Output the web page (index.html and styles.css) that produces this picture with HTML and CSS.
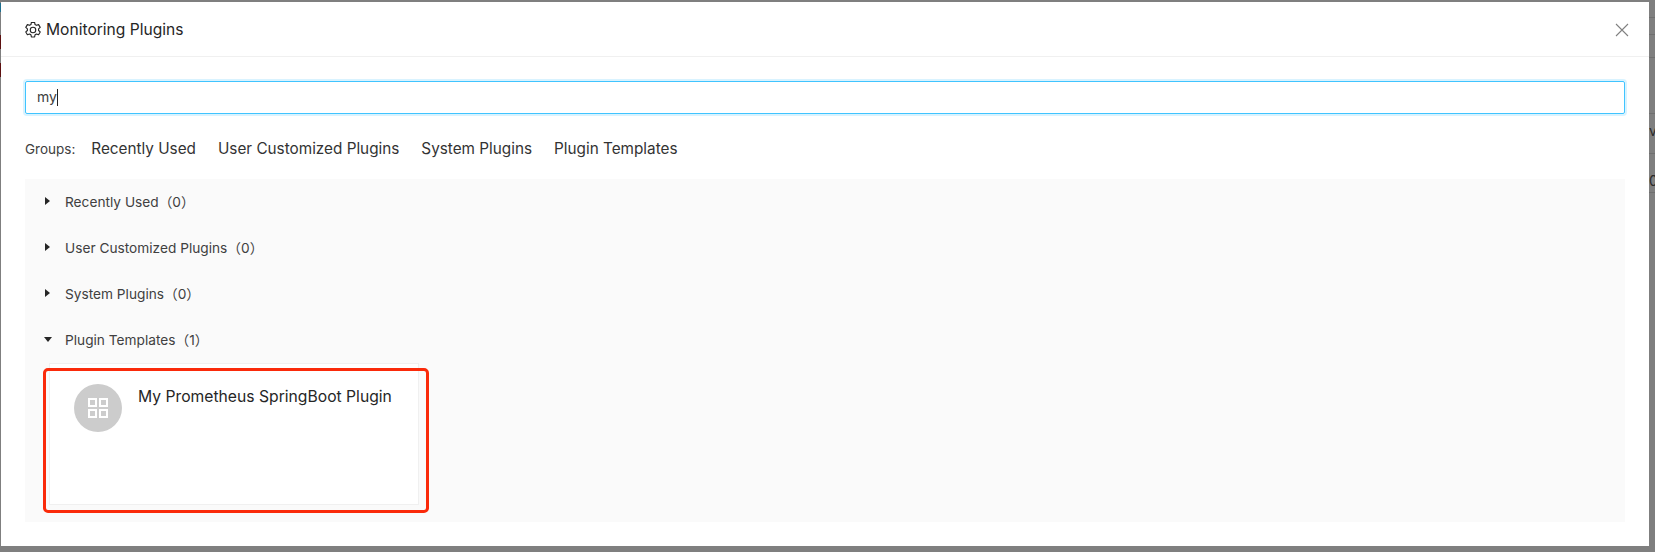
FILE: index.html
```html
<!DOCTYPE html>
<html lang="en">
<head>
<meta charset="utf-8">
<title>Monitoring Plugins</title>
<link rel="stylesheet" href="styles.css">
</head>
<body>
<div class="backdrop">
  <span class="bg-mark bg-mark-blue"></span>
  <span class="bg-mark bg-mark-a"></span>
  <span class="bg-mark bg-mark-b"></span>
  <span class="bg-line bg-line-a"></span>
  <span class="bg-line bg-line-b"></span>
  <span class="bg-line bg-line-c"></span>
  <span class="bg-line bg-line-d"></span>
  <span class="bg-line bg-line-e"></span>
  <span class="bg-line bg-line-f"></span>
  <span class="bg-text bg-text-a">v</span>
  <span class="bg-text bg-text-b">0</span>
  <div class="modal">
    <header class="modal-header">
      <h1 class="modal-title">
        <svg class="gear" viewBox="1.2 1 13.6 14" width="16" height="16" fill="none" stroke="#262626" stroke-width="1" stroke-linejoin="round">
          <path d="M6.6 1.3h2.8l.4 1.9 1.2.7 1.9-.6 1.4 2.4-1.4 1.3v1.4l1.4 1.3-1.4 2.4-1.9-.6-1.2.7-.4 1.9H6.6l-.4-1.9-1.2-.7-1.9.6-1.4-2.4 1.4-1.3V7L1.7 5.7l1.4-2.4 1.9.6 1.2-.7z"/>
          <circle cx="8" cy="8" r="2.4"/>
        </svg>
        <span>Monitoring Plugins</span>
      </h1>
      <svg class="close" viewBox="0 0 14 14" width="14" height="14" stroke="#808080" stroke-width="1.1" fill="none">
        <path d="M1 1l12 12M13 1L1 13"/>
      </svg>
    </header>
    <div class="modal-body">
      <div class="search"><span class="search-value">my</span><span class="caret"></span></div>
      <nav class="groups">
        <span class="groups-label">Groups:</span>
        <a class="group-link">Recently Used</a>
        <a class="group-link">User Customized Plugins</a>
        <a class="group-link">System Plugins</a>
        <a class="group-link">Plugin Templates</a>
      </nav>
      <section class="panel">
        <div class="row"><span class="tri tri-right"></span><span class="row-label">Recently Used（0）</span></div>
        <div class="row"><span class="tri tri-right"></span><span class="row-label">User Customized Plugins（0）</span></div>
        <div class="row"><span class="tri tri-right"></span><span class="row-label">System Plugins（0）</span></div>
        <div class="row"><span class="tri tri-down"></span><span class="row-label">Plugin Templates（1）</span></div>
        <div class="card-wrap">
          <article class="card">
            <div class="avatar">
              <svg viewBox="0 0 20 20" width="20" height="20" fill="none" stroke="#fff" stroke-width="2">
                <rect x="1" y="1" width="7" height="7"/>
                <rect x="12" y="1" width="7" height="7"/>
                <rect x="1" y="12" width="7" height="7"/>
                <rect x="12" y="12" width="7" height="7"/>
              </svg>
            </div>
            <div class="card-title">My Prometheus SpringBoot Plugin</div>
          </article>
          <div class="highlight"></div>
        </div>
      </section>
    </div>
  </div>
</div>
</body>
</html>
```

FILE: styles.css
```css
* { box-sizing: border-box; }
html, body { margin: 0; padding: 0; }
body {
  width: 1655px;
  height: 552px;
  overflow: hidden;
  font-family: Inter, "Noto Sans CJK SC", sans-serif;
  color: #262626;
}
.backdrop {
  position: relative;
  width: 1655px;
  height: 552px;
  background: #7f7f7f;
  padding: 2px 6px 6px 1px;
}
.bg-mark { position: absolute; left: 0; width: 1px; height: 14px; background: #5c1010; }
.bg-mark-blue { top: 3px; height: 9px; background: #1f6f8f; }
.bg-mark-a { top: 35px; }
.bg-mark-b { top: 63px; }
.bg-line { position: absolute; left: 1649px; width: 6px; height: 1px; background: #6f6f6f; }
.bg-line-a { top: 17px; }
.bg-line-b { top: 34px; }
.bg-line-c { top: 57px; }
.bg-line-d { top: 113px; }
.bg-line-e { top: 153px; }
.bg-line-f { top: 192px; }
.bg-text { position: absolute; left: 1649px; font-size: 14px; line-height: 16px; color: #2a2a2a; }
.bg-text-a { top: 123px; }
.bg-text-b { top: 173px; }
.modal {
  position: relative;
  height: 544px;
  background: #fff;
}
.modal-header {
  height: 55px;
  border-bottom: 1px solid #f0f0f0;
  display: flex;
  align-items: center;
  justify-content: space-between;
  padding: 2px 20px 0 24px;
}
.modal-title {
  margin: 0;
  display: flex;
  align-items: center;
  gap: 5px;
  font-size: 15.6px;
  font-weight: 400;
  line-height: 24px;
}
.modal-body { padding: 24px 24px 0; }
.search {
  height: 33px;
  border: 1px solid #40c4ff;
  border-radius: 2px;
  box-shadow: 0 0 0 2px rgba(64, 196, 255, .2);
  padding: 0 11px 3px;
  display: flex;
  align-items: center;
  font-size: 14px;
  color: #404040;
}
.caret { width: 1px; height: 17px; margin-top: 2px; background: #222; }
.groups {
  display: flex;
  align-items: center;
  height: 65px;
  padding-top: 4px;
  font-size: 15.3px;
}
.groups-label { font-size: 13.5px; color: #404040; margin-right: 16px; }
.group-link { margin-right: 22px; color: #333; }
.panel { height: 343px; background: #fafafa; }
.row {
  height: 46px;
  display: flex;
  align-items: center;
  padding-left: 19px;
  padding-bottom: 2px;
  font-size: 13.7px;
  color: #404040;
}
.tri { display: block; width: 0; height: 0; }
.tri-right {
  border-left: 5px solid #262626;
  border-top: 4px solid transparent;
  border-bottom: 4px solid transparent;
  margin-left: 1px;
  margin-right: 15px;
}
.tri-down {
  border-top: 5px solid #262626;
  border-left: 4px solid transparent;
  border-right: 4px solid transparent;
  margin-right: 13px;
}
.card-wrap { position: relative; padding-left: 24px; }
.card {
  width: 370px;
  height: 142px;
  background: #fff;
  border: 1px solid #f0f0f0;
  display: flex;
  align-items: flex-start;
  padding: 20px 0 0 24px;
  gap: 16px;
}
.avatar {
  width: 48px;
  height: 48px;
  border-radius: 50%;
  background: #ccc;
  display: flex;
  align-items: center;
  justify-content: center;
  flex: none;
}
.card-title { font-size: 15.7px; line-height: 22px; color: #262626; margin-top: 2px; }
.highlight {
  position: absolute;
  left: 18px;
  top: 5px;
  width: 386px;
  height: 145px;
  border: 3px solid #fa2a0a;
  border-radius: 5px;
}
```
